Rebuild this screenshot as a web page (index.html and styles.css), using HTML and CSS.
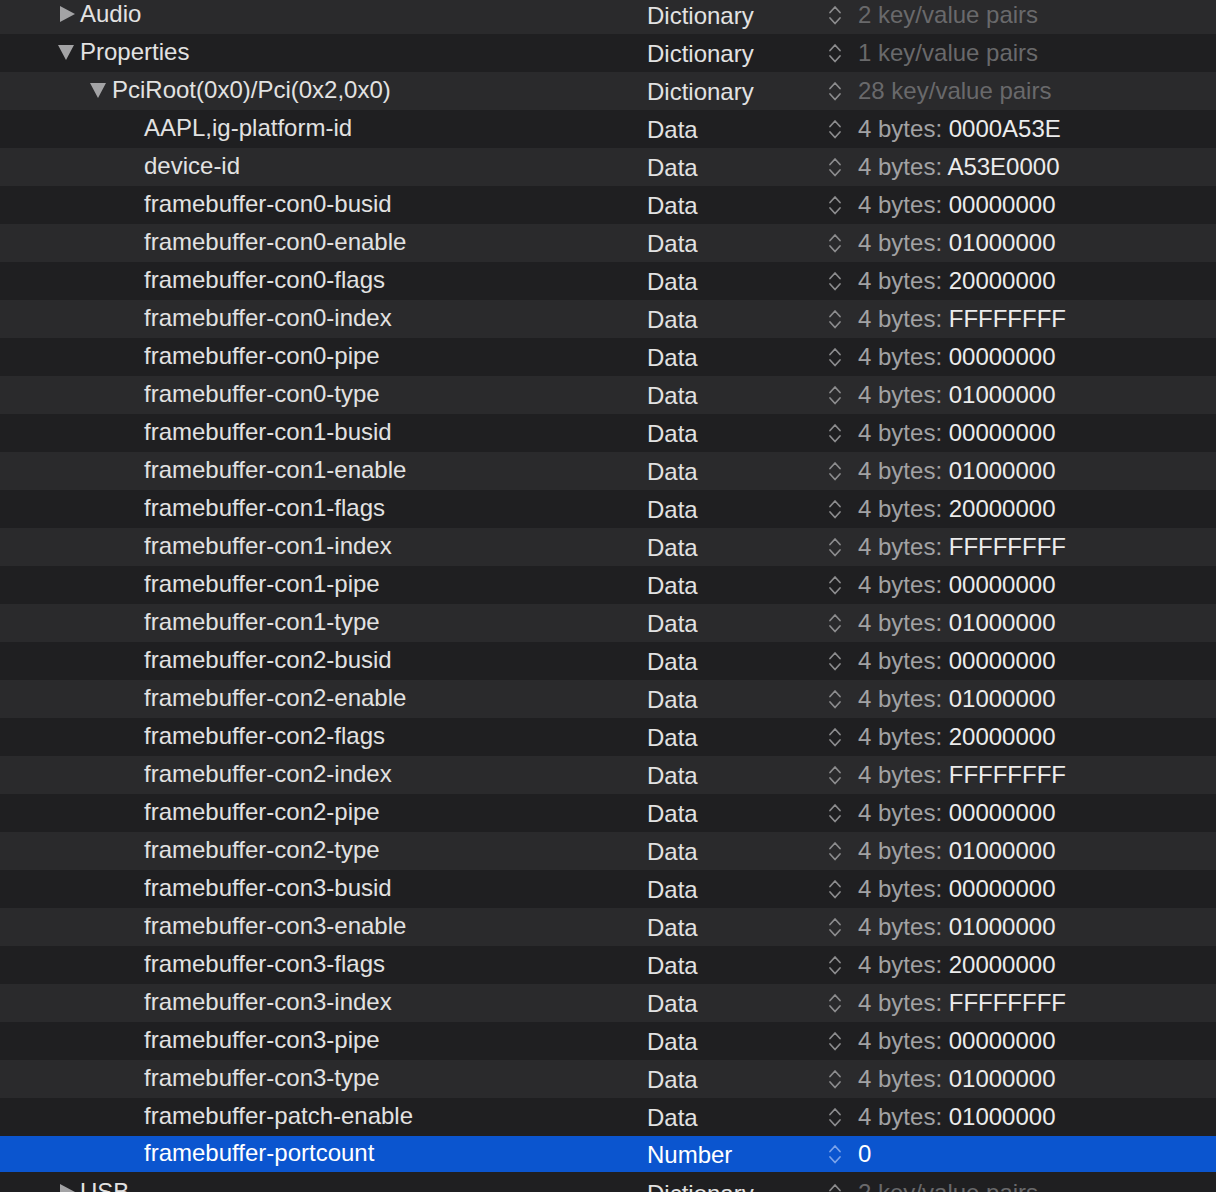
FILE: index.html
```html
<!DOCTYPE html>
<html lang="en">
<head>
    <meta charset="UTF-8">
    <title>config.plist</title>
    <link rel="stylesheet" href="styles.css">
</head>
<body>

<svg width="0" height="0" class="defs">
  <symbol id="stepper" viewBox="0 0 14 24">
    <path d="M2 9.5 L7 4 L12 9.5" fill="none" stroke="currentColor" stroke-width="1.7" stroke-linecap="round" stroke-linejoin="round"/>
    <path d="M2 15 L7 20.5 L12 15" fill="none" stroke="currentColor" stroke-width="1.7" stroke-linecap="round" stroke-linejoin="round"/>
  </symbol>
</svg>

<div class="plist">
  <div class="row light">
    <div class="key lvl1"><span class="tri closed"></span>Audio</div>
    <div class="type">Dictionary</div>
    <svg class="step"><use href="#stepper"/></svg>
    <div class="value dim">2 key/value pairs</div>
  </div>
  <div class="row">
    <div class="key lvl1"><span class="tri open"></span>Properties</div>
    <div class="type">Dictionary</div>
    <svg class="step"><use href="#stepper"/></svg>
    <div class="value dim">1 key/value pairs</div>
  </div>
  <div class="row light">
    <div class="key lvl2"><span class="tri open"></span>PciRoot(0x0)/Pci(0x2,0x0)</div>
    <div class="type">Dictionary</div>
    <svg class="step"><use href="#stepper"/></svg>
    <div class="value dim">28 key/value pairs</div>
  </div>
  <div class="row">
    <div class="key lvl3">AAPL,ig-platform-id</div>
    <div class="type">Data</div>
    <svg class="step"><use href="#stepper"/></svg>
    <div class="value"><span class="pre">4 bytes:</span> 0000A53E</div>
  </div>
  <div class="row light">
    <div class="key lvl3">device-id</div>
    <div class="type">Data</div>
    <svg class="step"><use href="#stepper"/></svg>
    <div class="value"><span class="pre">4 bytes:</span> A53E0000</div>
  </div>

  <div class="row">
    <div class="key lvl3">framebuffer-con0-busid</div>
    <div class="type">Data</div>
    <svg class="step"><use href="#stepper"/></svg>
    <div class="value"><span class="pre">4 bytes:</span> 00000000</div>
  </div>
  <div class="row light">
    <div class="key lvl3">framebuffer-con0-enable</div>
    <div class="type">Data</div>
    <svg class="step"><use href="#stepper"/></svg>
    <div class="value"><span class="pre">4 bytes:</span> 01000000</div>
  </div>
  <div class="row">
    <div class="key lvl3">framebuffer-con0-flags</div>
    <div class="type">Data</div>
    <svg class="step"><use href="#stepper"/></svg>
    <div class="value"><span class="pre">4 bytes:</span> 20000000</div>
  </div>
  <div class="row light">
    <div class="key lvl3">framebuffer-con0-index</div>
    <div class="type">Data</div>
    <svg class="step"><use href="#stepper"/></svg>
    <div class="value"><span class="pre">4 bytes:</span> FFFFFFFF</div>
  </div>
  <div class="row">
    <div class="key lvl3">framebuffer-con0-pipe</div>
    <div class="type">Data</div>
    <svg class="step"><use href="#stepper"/></svg>
    <div class="value"><span class="pre">4 bytes:</span> 00000000</div>
  </div>
  <div class="row light">
    <div class="key lvl3">framebuffer-con0-type</div>
    <div class="type">Data</div>
    <svg class="step"><use href="#stepper"/></svg>
    <div class="value"><span class="pre">4 bytes:</span> 01000000</div>
  </div>

  <div class="row">
    <div class="key lvl3">framebuffer-con1-busid</div>
    <div class="type">Data</div>
    <svg class="step"><use href="#stepper"/></svg>
    <div class="value"><span class="pre">4 bytes:</span> 00000000</div>
  </div>
  <div class="row light">
    <div class="key lvl3">framebuffer-con1-enable</div>
    <div class="type">Data</div>
    <svg class="step"><use href="#stepper"/></svg>
    <div class="value"><span class="pre">4 bytes:</span> 01000000</div>
  </div>
  <div class="row">
    <div class="key lvl3">framebuffer-con1-flags</div>
    <div class="type">Data</div>
    <svg class="step"><use href="#stepper"/></svg>
    <div class="value"><span class="pre">4 bytes:</span> 20000000</div>
  </div>
  <div class="row light">
    <div class="key lvl3">framebuffer-con1-index</div>
    <div class="type">Data</div>
    <svg class="step"><use href="#stepper"/></svg>
    <div class="value"><span class="pre">4 bytes:</span> FFFFFFFF</div>
  </div>
  <div class="row">
    <div class="key lvl3">framebuffer-con1-pipe</div>
    <div class="type">Data</div>
    <svg class="step"><use href="#stepper"/></svg>
    <div class="value"><span class="pre">4 bytes:</span> 00000000</div>
  </div>
  <div class="row light">
    <div class="key lvl3">framebuffer-con1-type</div>
    <div class="type">Data</div>
    <svg class="step"><use href="#stepper"/></svg>
    <div class="value"><span class="pre">4 bytes:</span> 01000000</div>
  </div>

  <div class="row">
    <div class="key lvl3">framebuffer-con2-busid</div>
    <div class="type">Data</div>
    <svg class="step"><use href="#stepper"/></svg>
    <div class="value"><span class="pre">4 bytes:</span> 00000000</div>
  </div>
  <div class="row light">
    <div class="key lvl3">framebuffer-con2-enable</div>
    <div class="type">Data</div>
    <svg class="step"><use href="#stepper"/></svg>
    <div class="value"><span class="pre">4 bytes:</span> 01000000</div>
  </div>
  <div class="row">
    <div class="key lvl3">framebuffer-con2-flags</div>
    <div class="type">Data</div>
    <svg class="step"><use href="#stepper"/></svg>
    <div class="value"><span class="pre">4 bytes:</span> 20000000</div>
  </div>
  <div class="row light">
    <div class="key lvl3">framebuffer-con2-index</div>
    <div class="type">Data</div>
    <svg class="step"><use href="#stepper"/></svg>
    <div class="value"><span class="pre">4 bytes:</span> FFFFFFFF</div>
  </div>
  <div class="row">
    <div class="key lvl3">framebuffer-con2-pipe</div>
    <div class="type">Data</div>
    <svg class="step"><use href="#stepper"/></svg>
    <div class="value"><span class="pre">4 bytes:</span> 00000000</div>
  </div>
  <div class="row light">
    <div class="key lvl3">framebuffer-con2-type</div>
    <div class="type">Data</div>
    <svg class="step"><use href="#stepper"/></svg>
    <div class="value"><span class="pre">4 bytes:</span> 01000000</div>
  </div>

  <div class="row">
    <div class="key lvl3">framebuffer-con3-busid</div>
    <div class="type">Data</div>
    <svg class="step"><use href="#stepper"/></svg>
    <div class="value"><span class="pre">4 bytes:</span> 00000000</div>
  </div>
  <div class="row light">
    <div class="key lvl3">framebuffer-con3-enable</div>
    <div class="type">Data</div>
    <svg class="step"><use href="#stepper"/></svg>
    <div class="value"><span class="pre">4 bytes:</span> 01000000</div>
  </div>
  <div class="row">
    <div class="key lvl3">framebuffer-con3-flags</div>
    <div class="type">Data</div>
    <svg class="step"><use href="#stepper"/></svg>
    <div class="value"><span class="pre">4 bytes:</span> 20000000</div>
  </div>
  <div class="row light">
    <div class="key lvl3">framebuffer-con3-index</div>
    <div class="type">Data</div>
    <svg class="step"><use href="#stepper"/></svg>
    <div class="value"><span class="pre">4 bytes:</span> FFFFFFFF</div>
  </div>
  <div class="row">
    <div class="key lvl3">framebuffer-con3-pipe</div>
    <div class="type">Data</div>
    <svg class="step"><use href="#stepper"/></svg>
    <div class="value"><span class="pre">4 bytes:</span> 00000000</div>
  </div>
  <div class="row light">
    <div class="key lvl3">framebuffer-con3-type</div>
    <div class="type">Data</div>
    <svg class="step"><use href="#stepper"/></svg>
    <div class="value"><span class="pre">4 bytes:</span> 01000000</div>
  </div>

  <div class="row">
    <div class="key lvl3">framebuffer-patch-enable</div>
    <div class="type">Data</div>
    <svg class="step"><use href="#stepper"/></svg>
    <div class="value"><span class="pre">4 bytes:</span> 01000000</div>
  </div>
  <div class="row selected">
    <div class="key lvl3">framebuffer-portcount</div>
    <div class="type">Number</div>
    <svg class="step"><use href="#stepper"/></svg>
    <div class="value">0</div>
  </div>
  <div class="row">
    <div class="key lvl1"><span class="tri closed"></span>USB</div>
    <div class="type">Dictionary</div>
    <svg class="step"><use href="#stepper"/></svg>
    <div class="value dim">2 key/value pairs</div>
  </div>
</div>

</body>
</html>
```

FILE: styles.css
```css
html, body {
    margin: 0;
    padding: 0;
}

body {
    background-color: #1f1f21;
    font-family: "Liberation Sans", Arial, sans-serif;
    font-size: 24px;
    color: #e2e2e2;
    overflow: hidden;
    height: 1192px;
}

.defs {
    position: absolute;
}

.plist {
    margin-top: -4px;
}

.row {
    display: flex;
    align-items: center;
    height: 38px;
    background-color: #1f1f21;
}

.row.light {
    background-color: #2a2a2c;
}

.row.selected {
    background-color: #0b55cf;
    color: #fff;
    height: 36px;
    margin-bottom: 2px;
}

.key {
    display: flex;
    align-items: center;
    width: 647px;
    flex-shrink: 0;
    box-sizing: border-box;
    white-space: nowrap;
    padding-bottom: 2px;
}

.key.lvl1 { padding-left: 58px; }
.key.lvl2 { padding-left: 90px; }
.key.lvl3 { padding-left: 144px; }

.tri {
    display: inline-block;
    width: 0;
    height: 0;
    margin-right: 6px;
}

.tri.closed {
    border-top: 8px solid transparent;
    border-bottom: 8px solid transparent;
    border-left: 15px solid #a3a3a5;
    margin-left: 2px;
    margin-right: 5px;
}

.tri.open {
    border-left: 8px solid transparent;
    border-right: 8px solid transparent;
    border-top: 15px solid #a3a3a5;
}

.type {
    width: 180px;
    flex-shrink: 0;
    padding-top: 2px;
}

.step {
    width: 14px;
    height: 24px;
    color: #8c8c8e;
    flex-shrink: 0;
    margin-left: 1px;
    margin-right: 16px;
}

.selected .step {
    color: #7ba3ea;
}

.value {
    color: #ececec;
    white-space: nowrap;
}

.value .pre {
    color: #a2a2a4;
}

.value.dim {
    color: #69696b;
}

.selected .value {
    color: #fff;
}
```
